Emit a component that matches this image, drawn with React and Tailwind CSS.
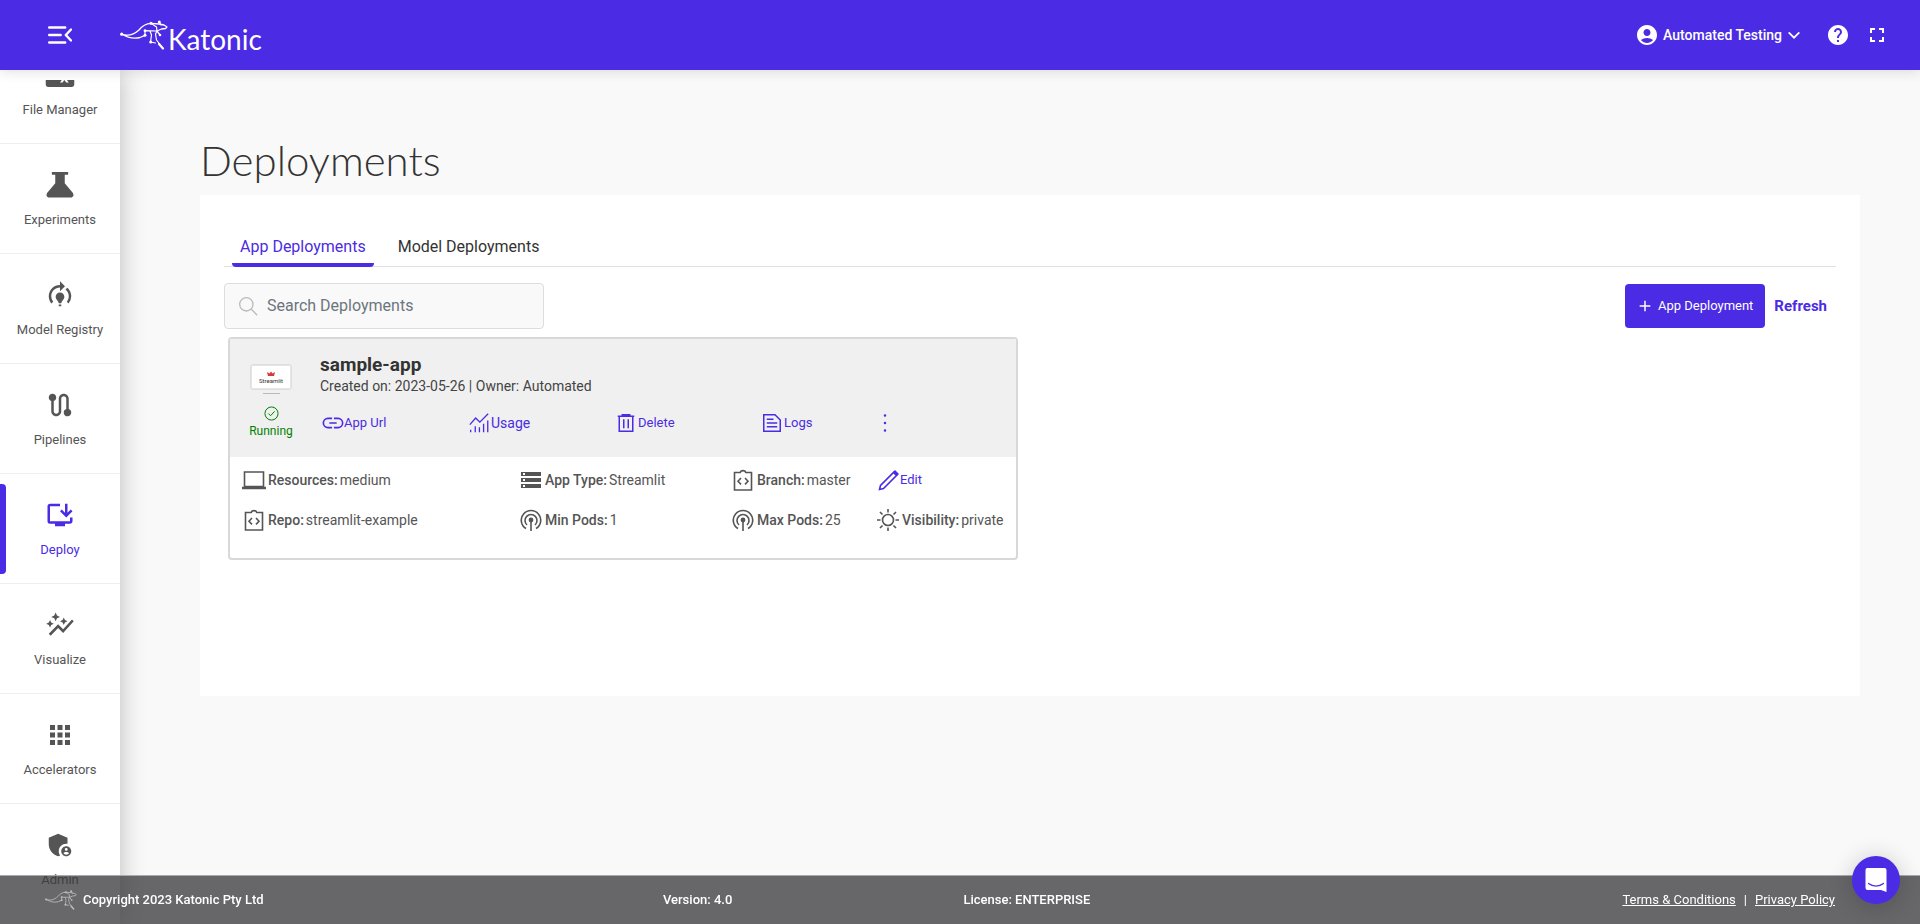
import React, { useState } from "react";
import {
  MdAccountCircle,
  MdAdminPanelSettings,
  MdApps,
  MdAutoGraph,
  MdFullscreen,
  MdHelp,
  MdInstallDesktop,
  MdModelTraining,
  MdRoute,
  MdStorage,
} from "react-icons/md";

function Line({ children, className = "size-6", width = 1.6 }) {
  return (
    <svg
      viewBox="0 0 24 24"
      fill="none"
      stroke="currentColor"
      strokeWidth={width}
      className={`shrink-0 ${className}`}
      aria-hidden="true"
    >
      {children}
    </svg>
  );
}

const Kangaroo = ({ className }) => (
  <svg
    viewBox="0 0 48 30"
    fill="none"
    stroke="currentColor"
    strokeLinecap="round"
    strokeLinejoin="round"
    className={className}
    aria-hidden="true"
  >
    <path
      strokeWidth="1.3"
      d="M1.500 14C8 16.500 14 14.500 19 10C22 6 26 3.500 31 3.300L39 4L44 5L47 7L45.500 8.500L41.500 9L37 11L40 15M1.500 14C8 18 14 19 20 17.500L25 15.300"
    />
    <path
      strokeWidth="1.2"
      d="M31 3.300L36.500 7L37 11L25 10.700V15.300M39.300 2L41 5M37 11L35.500 14L36.500 20L42.700 28M30 11L31.500 15L30.500 22L35.500 23"
    />
    <path strokeWidth="2.2" d="M39 24L43 28.500" />
    <g fill="currentColor" stroke="none">
      <circle cx="1.700" cy="14.200" r="1.600" />
      <circle cx="31" cy="3.300" r="1.500" />
      <circle cx="39.300" cy="2" r="1.500" />
      <circle cx="25" cy="10.700" r="1.400" />
      <circle cx="25" cy="15.300" r="1.500" />
      <circle cx="40" cy="15" r="1.300" />
      <circle cx="30.700" cy="22" r="1.500" />
    </g>
  </svg>
);

const Files = ({ className }) => (
  <svg viewBox="0 0 24 24" fill="currentColor" className={className} aria-hidden="true">
    <path
      fillRule="evenodd"
      d="M2.600 2.500h6.600l2.200 2.500h10c1.100 0 2 .9 2 2v12.600c0 1.100-.9 2-2 2H2.600c-1.100 0-2-.9-2-2v-15c0-1.100.9-2 2-2zM12 18h2l1.500-2 1.500 2h2l-3.500-5z"
    />
  </svg>
);

const Flask = ({ className }) => (
  <svg viewBox="0 0 24 24" fill="currentColor" className={className} aria-hidden="true">
    <path d="M5.500 1.500h13v2.300H15.800v6.700l6.400 7.700c1.200 1.900.5 3.800-1.600 3.800H3.400c-2.100 0-2.800-1.900-1.600-3.800l6.400-7.700V3.800H5.500z" />
  </svg>
);

const ClipboardCode = () => (
  <Line>
    <path d="M3.500 4.500h5.700C10 2 14 2 14.800 4.500h5.700V22h-17zM10 10l-3 3.200 3 3.200M14 10l3 3.200-3 3.200" />
  </Line>
);

const Pods = () => (
  <Line>
    <path d="M7 20.500a9.700 9.700 0 1 1 10 0M8 17a6 6 0 1 1 8 0M12 12v11" />
    <circle cx="12" cy="12" r="1.600" fill="currentColor" />
  </Line>
);

const menu = [
  { name: "File Manager", Icon: Files },
  { name: "Experiments", Icon: Flask },
  { name: "Model Registry", Icon: MdModelTraining },
  { name: "Pipelines", Icon: MdRoute },
  { name: "Deploy", Icon: MdInstallDesktop },
  { name: "Visualize", Icon: MdAutoGraph },
  { name: "Accelerators", Icon: MdApps },
  { name: "Admin", Icon: MdAdminPanelSettings },
];

function Header() {
  return (
    <header className="relative z-20 flex h-[70px] shrink-0 items-center bg-[#4b2be3] pl-12 pr-[31px] text-white shadow-[0_2px_12px_rgba(0,0,0,0.12)]">
      <button aria-label="Toggle menu">
        <Line className="size-6" width={2.4}>
          <path
            strokeLinecap="round"
            strokeLinejoin="round"
            d="M1.200 4.500h16M1.200 12h11.500M1.200 19.500h16M23 6.500L17.800 12l5.200 5.500"
          />
        </Line>
      </button>
      <a href="#" className="ml-12 flex pt-1" aria-label="Katonic">
        <Kangaroo className="mt-px h-[30px] w-12" />
        <span className="mt-1 font-[Lato] text-[28px] leading-8">Katonic</span>
      </a>
      <button className="ml-auto flex items-center text-sm font-medium">
        <MdAccountCircle className="mr-1 size-6" />
        Automated Testing
        <Line className="ml-1 size-4" width={2.6}>
          <path d="M4 8l8 8 8-8" />
        </Line>
      </button>
      <button className="ml-6" aria-label="Help">
        <MdHelp className="size-6" />
      </button>
      <button className="ml-[15px]" aria-label="Full screen">
        <MdFullscreen className="size-6" />
      </button>
    </header>
  );
}

function Sidebar() {
  return (
    <nav className="relative z-10 flex w-[120px] shrink-0 flex-col bg-white pb-[11px] pt-[10px] shadow-[0_0_24px_rgba(0,0,0,0.25)]">
      <div className="flex min-h-0 flex-1 flex-col justify-end overflow-hidden">
        {menu.map(({ name, Icon }) => (
          <a
            key={name}
            href="#"
            className={
              name === "Deploy"
                ? "relative flex h-[110px] shrink-0 flex-col items-center border-t border-[#eee] pt-[26px] text-[13px] text-[#4b2be3]"
                : "flex h-[110px] shrink-0 flex-col items-center border-t border-[#eee] pt-[26px] text-[13px] text-[#555]"
            }
          >
            {name === "Deploy" && (
              <span className="absolute left-0 top-[10px] h-[90px] w-[6px] rounded-r bg-[#4b2be3]" />
            )}
            <Icon className="mb-[10px] size-[30px]" />
            {name}
          </a>
        ))}
      </div>
    </nav>
  );
}

function Detail({ icon, label, value }) {
  return (
    <div className="flex items-center whitespace-nowrap text-sm text-[#555]">
      {icon}
      <span className="mx-[2px] font-medium">{label}:</span>
      {value}
    </div>
  );
}

function DeploymentCard() {
  return (
    <article className="ml-1 mt-2 w-[790px] max-w-full rounded border-2 border-[#d8d8d8] pb-[26px]">
      <div className="flex h-[118px] bg-[#f0f0f0]">
        <div className="flex w-[82px] flex-col items-center pt-[25px] text-xs text-[#008000]">
          <svg viewBox="0 0 42 31" className="h-[31px] w-[42px]" aria-hidden="true">
            <rect x="1" y="1" width="40" height="24" rx="1.500" fill="#fff" stroke="#ccc" />
            <path d="M17 8l2.500 1.500L21 7.500l1.500 2L25 8l-1 4h-6z" fill="#d9363e" />
            <text x="21" y="19" textAnchor="middle" fontSize="6" fontFamily="Roboto" fill="#333">
              Streamlit
            </text>
            <path d="M13 29.500h17" stroke="#bbb" />
          </svg>
          <Line className="mt-[11px] size-[15px]">
            <circle cx="12" cy="12" r="10.500" />
            <path d="M7 12l3.500 3.500 6.500-7" />
          </Line>
          <span className="mt-[2px] leading-4">Running</span>
        </div>
        <div className="flex-1 pl-2 pt-[15px]">
          <h2 className="text-[19px] font-bold leading-[22px] text-[#333]">sample-app</h2>
          <p className="text-sm leading-5 text-[#444]">Created on: 2023-05-26 | Owner: Automated</p>
          <div className="ml-[2px] mt-4 grid grid-cols-[147px_148px_146px_112px_24px] items-center text-[13px] text-[#4b2be3]">
            <a href="#" className="flex items-center">
              <Line className="size-[22px]" width={1.8}>
                <path d="M11 7H6.500a5 5 0 0 0 0 10H11M13 7h4.500a5 5 0 0 1 0 10H13M8 12h8" />
              </Line>
              App Url
            </a>
            <button className="flex items-center text-sm">
              <Line className="mr-[2px] size-5">
                <path d="M1 14L8 6l5 5L23 1M2 20v3M7.500 16v7M12.500 17v6M17.500 13v10M22.500 9v14" />
              </Line>
              Usage
            </button>
            <button className="flex items-center">
              <Line className="mr-[3px] size-[18px]" width={2}>
                <path d="M1 3h22M7 3V1h10v2M3 3v20h18V3M9 7v12M15 7v12" />
              </Line>
              Delete
            </button>
            <button className="flex items-center">
              <Line className="mr-[3px] size-[18px]" width={2}>
                <path d="M1 1h15l7 7v15H1zM5 7h9M5 12h14M5 17h14" />
              </Line>
              Logs
            </button>
            <button aria-label="More actions">
              <Line className="size-5">
                <path strokeWidth="3" strokeLinecap="round" d="M12 3v.1M12 12v.1M12 21v.1" />
              </Line>
            </button>
          </div>
        </div>
      </div>
      <div className="grid grid-cols-[277px_212px_145px_1fr] gap-y-4 pl-3 pt-[11px]">
        <Detail
          icon={
            <Line>
              <path d="M2.500 4h19v14.500h-19z" />
              <path strokeWidth="2.500" d="M0 20h24" />
            </Line>
          }
          label="Resources"
          value="medium"
        />
        <Detail icon={<MdStorage className="size-6" />} label="App Type" value="Streamlit" />
        <Detail icon={<ClipboardCode />} label="Branch" value="master" />
        <button className="flex items-center text-[13px] text-[#4b2be3]">
          <Line>
            <path d="M3.500 21.500l1-4L17.500 4.500l3 3L7.500 20.500z" />
            <path d="M17 4l2-2 4 4-2 2z" fill="currentColor" stroke="none" />
          </Line>
          Edit
        </button>
        <Detail icon={<ClipboardCode />} label="Repo" value="streamlit-example" />
        <Detail icon={<Pods />} label="Min Pods" value="1" />
        <Detail icon={<Pods />} label="Max Pods" value="25" />
        <Detail
          icon={
            <Line>
              <circle cx="12" cy="12" r="5.500" />
              <path d="M12 1v3.500M12 19.500V23M1 12h3.500M19.500 12H23M4 4l2.500 2.500M17.500 17.500L20 20M4 20l2.500-2.500M17.500 6.500L20 4" />
            </Line>
          }
          label="Visibility"
          value="private"
        />
      </div>
    </article>
  );
}

function Footer() {
  return (
    <footer className="fixed inset-x-0 bottom-0 z-30 flex h-[49px] items-center border-t border-[#aaa] bg-[#39393b]/76 pl-[45px] pr-[85px] text-[13px] font-medium text-white">
      <div className="flex flex-[617] items-center">
        <Kangaroo className="mr-[6px] h-5 w-8 text-[#bbb]" />
        Copyright 2023 Katonic Pty Ltd
      </div>
      <div className="flex-[300]">Version: 4.0</div>
      <div className="flex-[658]">License: ENTERPRISE</div>
      <div className="flex gap-2 font-normal">
        <a href="#" className="underline">
          Terms &amp; Conditions
        </a>
        <span>|</span>
        <a href="#" className="underline">
          Privacy Policy
        </a>
      </div>
    </footer>
  );
}

function App() {
  const [search, setSearch] = useState("");

  return (
    <div className="flex h-screen flex-col bg-[#f9f9f9] font-[Roboto,sans-serif]">
      <Header />
      <div className="flex min-h-0 flex-1">
        <Sidebar />
        <main className="flex-1 overflow-hidden pl-20 pr-[60px] pt-[60px]">
          <h1 className="mb-[5px] font-[Lato] text-[42px] font-light leading-[60px] text-[#333]">
            Deployments
          </h1>
          <section className="min-h-[501px] bg-white px-6 pt-9">
            <div className="flex border-b border-[#dee2e6] pl-2 text-base text-[#333]">
              <button className="-mb-px rounded-b border-b-4 border-[#4b2be3] px-2 py-1 text-[#4b2be3]">
                App Deployments
              </button>
              <button className="-mb-px ml-4 border-b-4 border-transparent px-2 py-1">
                Model Deployments
              </button>
            </div>
            <div className="mt-4 flex items-center">
              <label className="flex h-[46px] w-80 items-center rounded border border-[#ddd] bg-[#f9f9f9] pl-[13px] text-[#bbb]">
                <Line className="size-5">
                  <circle cx="10" cy="10" r="8" />
                  <path d="M16 16l7 7" />
                </Line>
                <input
                  type="text"
                  aria-label="Search Deployments"
                  placeholder="Search Deployments"
                  value={search}
                  onChange={(e) => setSearch(e.target.value)}
                  className="ml-[9px] w-full bg-transparent text-base text-[#333] outline-none placeholder:text-[#6c757d]"
                />
              </label>
              <button className="ml-auto flex h-11 items-center rounded bg-[#4b2be3] px-3 text-[13px] text-white">
                <Line className="mr-[5px] size-4" width={2.2}>
                  <path d="M12 4v16M4 12h16" />
                </Line>
                App Deployment
              </button>
              <button className="mx-[9px] text-[15px] font-bold text-[#4b2be3]">Refresh</button>
            </div>
            <DeploymentCard />
          </section>
        </main>
      </div>
      <Footer />
      <button
        aria-label="Open chat"
        className="fixed bottom-5 right-5 z-40 flex size-12 items-center justify-center rounded-full bg-[#4b2be3] shadow-[0_2px_24px_rgba(0,0,0,0.2)]"
      >
        <svg viewBox="0 0 24 26" className="h-[26px] w-6" aria-hidden="true">
          <path
            d="M3 1h17.500A2 2 0 0 1 22.500 3V25l-5.500-2H3.500A2 2 0 0 1 1.500 21V3A2 2 0 0 1 3 1z"
            fill="#fff"
          />
          <path
            d="M4.500 16.500c4.500 3.500 10.500 3.500 15 0"
            fill="none"
            stroke="#4b2be3"
            strokeWidth="1.300"
            strokeLinecap="round"
          />
        </svg>
      </button>
    </div>
  );
}

export default App;
